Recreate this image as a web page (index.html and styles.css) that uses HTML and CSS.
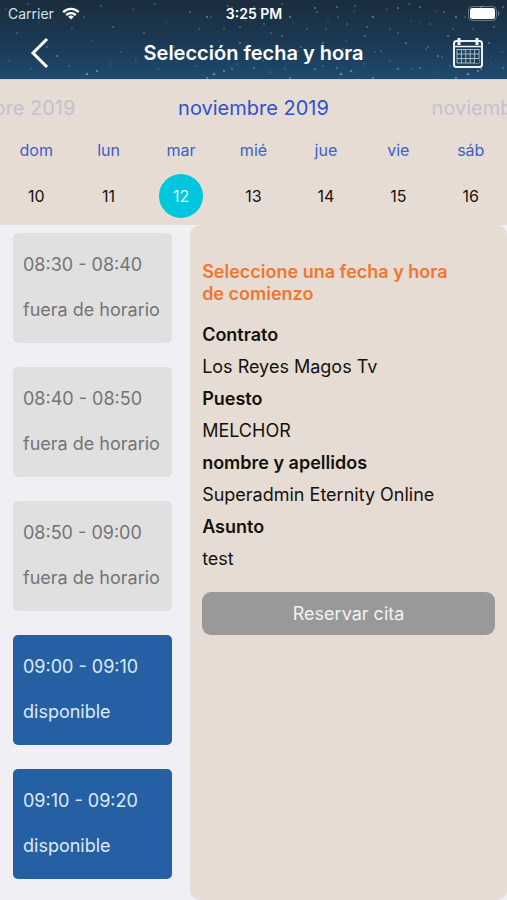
FILE: index.html
```html
<!DOCTYPE html>
<html lang="es">
<head>
    <meta charset="UTF-8">
    <meta name="viewport" content="width=device-width, initial-scale=1.0">
    <title>Selección fecha y hora</title>
    <link rel="stylesheet" href="styles.css">
</head>
<body>
    <header class="top">
        <!-- starry sky -->
        <svg class="sky" width="100%" height="100%" aria-hidden="true">
            <defs>
                <pattern id="stars" width="127" height="79" patternUnits="userSpaceOnUse">
                    <g fill="#7fa3bd">
                        <circle cx="6" cy="9" r="0.7" opacity=".5"/>
                        <circle cx="17" cy="33" r="1" opacity=".4"/>
                        <circle cx="28" cy="4" r="0.8" opacity=".6"/>
                        <circle cx="39" cy="22" r="0.6" opacity=".6"/>
                        <circle cx="47" cy="47" r="0.9" opacity=".5"/>
                        <circle cx="57" cy="56" r="1.1" opacity=".6"/>
                        <circle cx="63" cy="12" r="0.9" opacity=".5"/>
                        <circle cx="72" cy="29" r="0.7" opacity=".7"/>
                        <circle cx="84" cy="17" r="0.8" opacity=".6"/>
                        <circle cx="92" cy="41" r="0.7" opacity=".5"/>
                        <circle cx="101" cy="6" r="0.9" opacity=".5"/>
                        <circle cx="113" cy="27" r="1" opacity=".5"/>
                        <circle cx="121" cy="52" r="0.7" opacity=".6"/>
                        <circle cx="87" cy="74" r="1.3" opacity=".7"/>
                        <circle cx="97" cy="71" r="1" opacity=".8"/>
                        <circle cx="69" cy="66" r="0.8" opacity=".5"/>
                        <circle cx="31" cy="69" r="0.7" opacity=".6"/>
                        <circle cx="9" cy="61" r="0.8" opacity=".5"/>
                        <circle cx="110" cy="64" r="0.8" opacity=".5"/>
                    </g>
                </pattern>
                <pattern id="dense" width="83" height="61" patternUnits="userSpaceOnUse">
                    <g fill="#8fb2ca">
                        <circle cx="5" cy="7" r="0.9" opacity=".5"/>
                        <circle cx="15" cy="24" r="0.8" opacity=".6"/>
                        <circle cx="22" cy="11" r="0.6" opacity=".6"/>
                        <circle cx="33" cy="36" r="1" opacity=".5"/>
                        <circle cx="41" cy="17" r="0.9" opacity=".7"/>
                        <circle cx="49" cy="51" r="0.8" opacity=".6"/>
                        <circle cx="58" cy="29" r="0.7" opacity=".6"/>
                        <circle cx="66" cy="8" r="1.1" opacity=".5"/>
                        <circle cx="74" cy="43" r="0.9" opacity=".6"/>
                        <circle cx="11" cy="49" r="0.8" opacity=".5"/>
                        <circle cx="27" cy="57" r="0.7" opacity=".6"/>
                        <circle cx="79" cy="21" r="0.6" opacity=".6"/>
                    </g>
                </pattern>
            </defs>
            <rect width="100%" height="100%" fill="url(#stars)"/>
            <rect x="40%" width="60%" height="100%" fill="url(#dense)"/>
        </svg>

        <div class="status">
            <div class="carrier">
                <span>Carrier</span>
                <svg width="18" height="13" viewBox="0 0 18 13" fill="none" stroke="#fff" stroke-width="2.4">
                    <path d="M1.3 5.1a10.9 10.9 0 0 1 15.4 0"/>
                    <path d="M4.2 8.1a6.8 6.8 0 0 1 9.6 0"/>
                    <path d="M9 12.6L6.2 9.8a4 4 0 0 1 5.6 0z" fill="#fff" stroke="none"/>
                </svg>
            </div>
            <span class="clock">3:25 PM</span>
            <svg class="battery" width="32" height="15" viewBox="0 0 32 15">
                <rect x="0.5" y="0.5" width="28" height="14" rx="4" fill="none" stroke="#65798a"/>
                <rect x="2" y="2" width="25" height="11" rx="2.5" fill="#fff"/>
                <path d="M30 5v5c2-.8 2-4.2 0-5z" fill="#65798a"/>
            </svg>
        </div>

        <div class="navbar">
            <button type="button" class="icon-btn" aria-label="Volver">
                <svg width="32" height="32" viewBox="0 0 32 32" fill="none" stroke="#fff" stroke-width="3">
                    <path d="M24 2L10 16l14 14"/>
                </svg>
            </button>
            <h1>Selección fecha y hora</h1>
            <button type="button" class="icon-btn" aria-label="Calendario">
                <svg width="32" height="32" viewBox="0 0 32 32" fill="none" stroke="#eef2f5">
                    <rect x="2" y="4" width="28" height="26" rx="2.5" stroke-width="2"/>
                    <path d="M2 9.5h28" stroke-width="1.5"/>
                    <path d="M7 1v7M25 1v7" stroke-width="3"/>
                    <path d="M5 12.5h22M5 17h22M5 21.5h22M5 26h22M5 12v14M9.4 12v14M13.8 12v14M18.2 12v14M22.6 12v14M27 12v14" stroke="#a9bac8"/>
                    <path d="M23 22h4v4h-4z" fill="#1c3e5c" stroke="none"/>
                </svg>
            </button>
        </div>
    </header>

    <section class="calendar">
        <div class="months">
            <span class="month">noviembre 2019</span>
            <span class="month current">noviembre 2019</span>
            <span class="month">noviembre 2019</span>
        </div>
        <table class="week">
            <thead>
                <tr>
                    <th>dom</th>
                    <th>lun</th>
                    <th>mar</th>
                    <th>mié</th>
                    <th>jue</th>
                    <th>vie</th>
                    <th>sáb</th>
                </tr>
            </thead>
            <tbody>
                <tr>
                    <td><button type="button">10</button></td>
                    <td><button type="button">11</button></td>
                    <td><button type="button" class="selected">12</button></td>
                    <td><button type="button">13</button></td>
                    <td><button type="button">14</button></td>
                    <td><button type="button">15</button></td>
                    <td><button type="button">16</button></td>
                </tr>
            </tbody>
        </table>
    </section>

    <main class="content">
        <div class="slots">
            <button type="button" class="slot" disabled>
                <span>08:30 - 08:40</span>
                <span>fuera de horario</span>
            </button>
            <button type="button" class="slot" disabled>
                <span>08:40 - 08:50</span>
                <span>fuera de horario</span>
            </button>
            <button type="button" class="slot" disabled>
                <span>08:50 - 09:00</span>
                <span>fuera de horario</span>
            </button>
            <button type="button" class="slot free">
                <span>09:00 - 09:10</span>
                <span>disponible</span>
            </button>
            <button type="button" class="slot free">
                <span>09:10 - 09:20</span>
                <span>disponible</span>
            </button>
        </div>

        <div class="details">
            <h2>Seleccione una fecha y hora de comienzo</h2>
            <dl>
                <dt>Contrato</dt>
                <dd>Los Reyes Magos Tv</dd>
                <dt>Puesto</dt>
                <dd>MELCHOR</dd>
                <dt>nombre y apellidos</dt>
                <dd>Superadmin Eternity Online</dd>
                <dt>Asunto</dt>
                <dd>test</dd>
            </dl>
            <button type="button" class="reserve">Reservar cita</button>
        </div>
    </main>
</body>
</html>
```
FILE: styles.css
```css
* {
    box-sizing: border-box;
}
body {
    margin: 0;
    min-height: 100vh;
    display: flex;
    flex-direction: column;
    background: #efeff4;
    color: #14110f;
    font-family: Inter, "Liberation Sans", sans-serif;
    font-size: 18px;
}
button {
    border: 0;
    padding: 0;
    background: none;
    color: inherit;
    font: inherit;
}
svg {
    display: block;
}

/* header */
.top {
    position: relative;
    background: linear-gradient(#1b2d3d, #1b3852 50%, #1f4a70);
    color: #fff;
}
.sky {
    position: absolute;
    top: 0;
    left: 0;
}
.status {
    position: relative;
    display: grid;
    grid-template-columns: 1fr auto 1fr;
    align-items: center;
    height: 27px;
    padding: 0 7px 0 8px;
    font-size: 14px;
}
.carrier {
    display: flex;
    align-items: center;
    gap: 8px;
    color: #d9e0e6;
}
.clock {
    font-weight: 600;
}
.battery {
    justify-self: end;
}
.navbar {
    position: relative;
    display: flex;
    align-items: center;
    justify-content: space-between;
    height: 52px;
    padding: 0 23px;
}
.navbar h1 {
    margin: 0;
    font-size: 20px;
    font-weight: 600;
}

/* calendar */
.calendar {
    padding-top: 14px;
    background: #e6dcd3;
    border-top: 1px solid #d3d0cd;
    overflow: hidden;
}
.months {
    display: flex;
    justify-content: center;
    font-size: 20px;
    line-height: 28px;
}
.month {
    flex: 0 0 50%;
    text-align: center;
    color: #c5c0d0;
}
.month.current {
    color: #2d52cf;
}
.week {
    width: 100%;
    margin-top: 16px;
    border-collapse: collapse;
    table-layout: fixed;
    font-size: 16px;
    text-align: center;
}
.week th {
    padding: 0;
    line-height: 24px;
    color: #3b5fd0;
    font-weight: 400;
}
.week td {
    padding: 12px 0 7px;
}
.week td button {
    width: 44px;
    height: 44px;
    border-radius: 50%;
}
.week .selected {
    background: #00c7dd;
    color: #e6fbfd;
}

/* slots and details */
.content {
    flex: 1;
    display: grid;
    grid-template-columns: 3fr 5fr;
}
.slots {
    display: flex;
    flex-direction: column;
    gap: 24px;
    padding: 8px 18px 20px 13px;
}
.slot {
    display: flex;
    flex-direction: column;
    gap: 21px;
    padding: 20px 10px;
    height: 110px;
    border-radius: 5px;
    background: #e0e0e0;
    color: #747474;
    line-height: 24px;
    text-align: left;
    white-space: nowrap;
}
.slot.free {
    background: #2660a4;
    color: #dfeaf6;
}
.details {
    padding: 36px 12px;
    background: #e6dcd3;
    border-radius: 10px;
}
.details h2 {
    max-width: 270px;
    margin: 0 0 14px;
    font-size: 18px;
    font-weight: 600;
    line-height: 22px;
    color: #f0762f;
}
.details dl {
    margin: 0;
    line-height: 32px;
}
.details dt {
    font-weight: 600;
}
.details dd {
    margin: 0;
}
.reserve {
    width: 100%;
    height: 43px;
    margin-top: 17px;
    border-radius: 9px;
    background: #999;
    color: #f2f2f2;
}
```
